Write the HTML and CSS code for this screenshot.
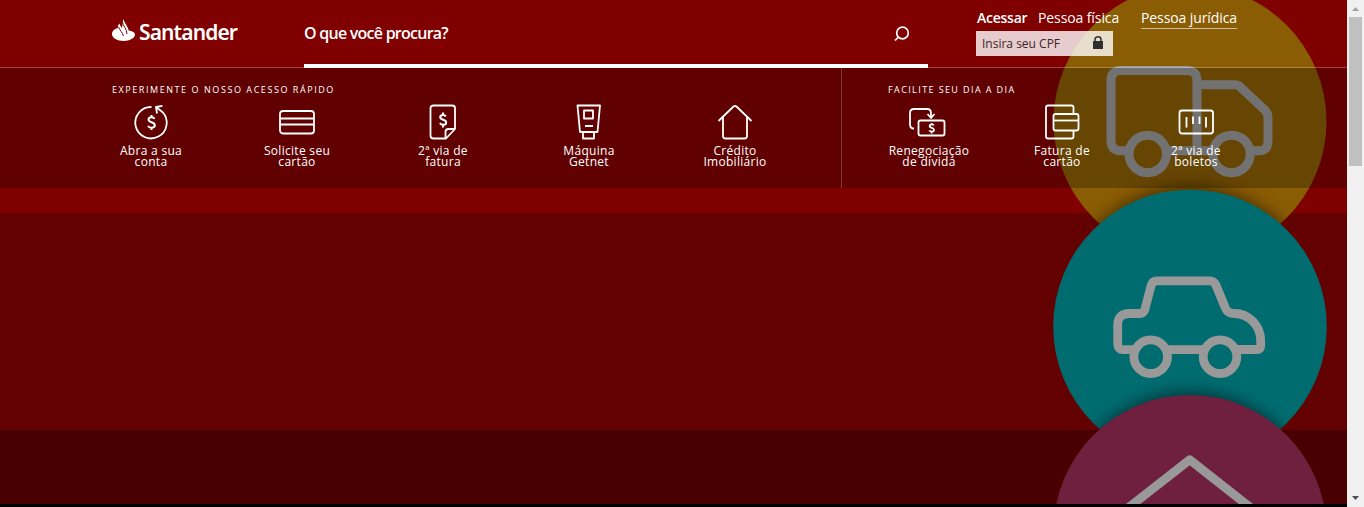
FILE: index.html
```
<!DOCTYPE html>
<html lang="pt-BR">
<head>
<meta charset="utf-8">
<title>Santander</title>
<link rel="stylesheet" href="styles.css">
</head>
<body>
<div class="window">
  <div class="page">
    <svg class="art" viewBox="0 0 1347 504" aria-hidden="true">
      <defs><filter id="soft" x="-20%" y="-20%" width="140%" height="140%"><feGaussianBlur stdDeviation="8"/></filter>
      <clipPath id="c1"><circle cx="1190" cy="121.5" r="136.5"/></clipPath>
      <clipPath id="c2"><circle cx="1190" cy="326.5" r="136.8"/></clipPath></defs>
      <circle cx="1190" cy="121.5" r="136.5" fill="#8a5c04"/>
      <g fill="none" stroke="#999" stroke-width="9" stroke-linejoin="round">
        <path d="M1129 150.700h-8q-10 0-10-10V80.500q0-10 10-10h66q10 0 10 10v70M1166 150.700h47M1197 84.700h38q3 0 5 2l25 23.500q3 3 3 7v24q0 9.500-9 9.500h-9"/>
        <circle cx="1147.700" cy="154" r="18.700"/><circle cx="1231.500" cy="154" r="18.700"/>
      </g>
      <g clip-path="url(#c1)"><circle cx="1190" cy="317" r="130" fill="#000" opacity=".5" filter="url(#soft)"/></g>
      <circle cx="1190" cy="326.500" r="136.800" fill="#006c70"/>
      <g fill="none" stroke="#999" stroke-width="8.800" stroke-linejoin="round">
        <path d="M1134 349.700h-11q-5.300 0-5.300-6V325q0-11.500 12-11.500h10q4 0 5.300-4.500l6-23q1.300-5.200 6-5.200h53q4 0 6 4.500l9.500 23q2.500 5.200 9 5.200c14 0 26.200 12 26.200 27v5q0 4-3.500 4H1236M1166 349.700h39"/>
        <circle cx="1150.700" cy="356.700" r="16.800"/><circle cx="1220" cy="356.700" r="16.800"/>
      </g>
      <g clip-path="url(#c2)"><circle cx="1190" cy="522" r="130" fill="#000" opacity=".5" filter="url(#soft)"/></g>
      <circle cx="1190" cy="531.500" r="136.500" fill="#6e203e"/>
      <path d="M1120 514.300l69.700-54.500L1259 514.300" fill="none" stroke="#999" stroke-width="8.800" stroke-linejoin="round"/>
    </svg>
    <header class="header">
      <a class="logo">
        <svg width="24" height="24" viewBox="0 0 24 24"><path fill="#fff" d="M11.200 1c.8 2.500 2.500 5 4 7.800 1 1.800 1.400 3 1.400 3.600 3.800.7 6.400 1.700 6.400 4.200 0 3.600-5 6.400-11.400 6.400S0 19.800 0 16c0-2.700 2.300-5.200 5.800-6 .2-2 .3-3.500 1.600-4.600.6 1.800 1.500 3 2.600 4.700z"/><path fill="none" stroke="#800000" stroke-width="1" d="M10.400 4c.4 3.500 4.600 7 4.600 12M6.500 9c.8 3 4.300 5.500 4.900 9"/></svg>
        <span class="brand">Santander</span>
      </a>
      <div class="search"><span>O que você procura?</span>
        <svg class="lens" width="16" height="16" viewBox="0 0 16 16" fill="none" stroke="#fff" stroke-width="1.700"><circle cx="8.500" cy="7" r="5.800"/><path d="M4.500 11L1 14.500"/></svg>
      </div>
      <div class="access">
        <div class="tabs"><b>Acessar</b><span class="fis">Pessoa física</span><span class="jur">Pessoa jurídica</span></div>
        <div class="cpf"><span>Insira seu CPF</span>
          <svg width="10" height="13" viewBox="0 0 10 13"><path d="M2 6V3.500Q2 .8 5 .8t3 2.700V6" fill="none" stroke="#303030" stroke-width="1.500"/><path d="M0 5h10v8H0z" fill="#303030"/></svg>
        </div>
      </div>
    </header>
    <nav class="quick">
      <section class="group main">
        <h2>EXPERIMENTE O NOSSO ACESSO RÁPIDO</h2>
        <div class="items">
          <a class="item w78"><svg class="ico" viewBox="0 0 36 36"><path d="M18.500 3A15.700 15.700 0 1 0 29.500 8M24 9.500l-1-6.500 6.500-1.200M23 3l7 5.500"/><path class="thick" d="M21.500 15c-1-2.500-6-2.300-6 .6 0 3.400 6.300 2 6.300 5.600 0 3-5.400 3.300-6.800.7M18.500 11v3m0 9v3"/></svg>Abra a sua<br>conta</a>
          <a class="item w78"><svg class="ico" viewBox="0 0 36 36"><rect x="1" y="7" width="34" height="22.500" rx="3"/><path d="M1 14.500h34M1 20.500h34"/></svg>Solicite seu<br>cartão</a>
          <a class="item w78"><svg class="ico" viewBox="0 0 36 36"><path d="M21 34.500H8.500q-3 0-3-3V4q0-2.500 3-2.500h18.500q3 0 3 2.500v21zM20.500 34v-6q0-3 3-3h6"/><path class="thick" d="M20.800 12.500c-1-2.300-5.600-2-5.600.7 0 3.200 6 2 6 5.200 0 3-5 3-6.200.6M18 8.500v3m0 9v3"/></svg>2ª via de<br>fatura</a>
          <a class="item w78"><svg class="ico" viewBox="0 0 36 36"><path d="M6.500 1.500h22.500l-2.500 26.500H9zM13 6.500h9v8h-9zM14 22h8M12 28h11v6.500H12z"/></svg>Máquina<br>Getnet</a>
          <a class="item w78"><svg class="ico" viewBox="0 0 36 36"><path d="M1.500 17L16.500 2.500q1.500-1 3 0L34.500 17M6 13v19q0 2.500 2.500 2.500h19q2.500 0 2.500-2.500V13"/></svg>Crédito<br>Imobiliário</a>
        </div>
      </section>
      <section class="group daily">
        <h2>FACILITE SEU DIA A DIA</h2>
        <div class="items">
          <a class="item w82"><svg class="ico" viewBox="2 0 36 36"><path d="M5 24.500q-4 0-4-4V9q0-4 4-4h13q4 0 4 4v4M18.500 10l3.500 4 3.500-4"/><rect x="9.500" y="16.500" width="26" height="15" rx="2"/><path d="M24.800 21.500c-.6-1.800-4.200-1.500-4.200.4 0 2.500 4.400 1.500 4.400 4 0 2-3.800 2.300-4.700.4M22.600 19v2m0 6v2.500"/></svg>Renegociação<br>de dívida</a>
          <a class="item w78 bill"><svg class="ico" viewBox="0 0 36 36"><path d="M29.500 9V3q0-1.500-2-1.500H4Q2 1.500 2 3.500v29q0 2 2 2h23.500q2 0 2-2V27"/><rect x="9.500" y="10" width="25" height="16.500" rx="2"/><path d="M9.500 16.500h25"/></svg>Fatura de<br>cartão</a>
          <a class="item w78"><svg class="ico" viewBox="0 0 36 36"><rect x="1.500" y="6.500" width="33.500" height="23" rx="2.500"/><path d="M8.500 13v10.500M15 12.500V20M21.500 12.500V20M28 13v10.500"/></svg>2ª via de<br>boletos</a>
        </div>
      </section>
    </nav>
    <div class="gap"></div>
    <main class="hero"></main>
    <div class="lower"></div>
    <div class="edge"></div>
  </div>
  <aside class="scrollbar">
    <svg width="17" height="17"><path d="M5 11h7L8.500 7z" fill="#a3a3a3"/></svg>
    <div class="thumb"></div>
    <svg class="down" width="17" height="17"><path d="M5 6h7L8.500 10z" fill="#505050"/></svg>
  </aside>
</div>
</body>
</html>
```
FILE: styles.css
```
* { box-sizing: border-box; }
body { margin: 0; overflow: hidden; font-family: "Open Sans", sans-serif; color: #fff; }
.window { display: flex; width: 1364px; height: 507px; }
.page { position: relative; isolation: isolate; width: 1347px; background: #800000; }
.art { position: absolute; z-index: 1; left: 0; top: 0; width: 1347px; height: 504px; }
.header, .quick { position: relative; z-index: 2; display: flex; }
.header { height: 68px; padding-left: 112px; border-bottom: 1px solid rgba(255,255,255,.25); }
.logo { display: flex; width: 192px; padding-top: 18px; gap: 3px; }
.brand { font: 600 21px/28px "Noto Sans", sans-serif; letter-spacing: -.88px; white-space: nowrap; }
.search { display: flex; justify-content: space-between; align-items: center; width: 624px; height: 68px; padding: 2px 18px 0 0; border-bottom: 4px solid #fff; font-size: 16px; font-weight: 600; letter-spacing: -.75px; }
.lens { margin-top: 1px; }
.access { width: 290px; margin-left: 48px; padding-top: 8px; }
.tabs { display: flex; align-items: flex-start; padding-left: 1px; font-size: 14px; line-height: 20px; white-space: nowrap; }
.tabs b { width: 61px; font-weight: 600; letter-spacing: -.25px; }
.fis { width: 103px; letter-spacing: -.1px; }
.jur { width: 96px; letter-spacing: -.1px; border-bottom: 1px solid rgba(255,255,255,.6); }
.cpf { display: flex; justify-content: space-between; align-items: center; width: 137px; height: 25px; margin-top: 2px; padding: 0 10px 0 6px; background: rgba(255,255,255,.8); color: #402327; font-size: 12px; letter-spacing: 0; }
.cpf svg { margin-top: -2px; }
.quick { height: 120px; background: rgba(0,0,0,.25); }
.group { padding-top: 15px; }
.main { width: 842px; padding-left: 112px; border-right: 1px solid rgba(255,255,255,.22); }
.daily { padding-left: 46px; }
h2 { margin: 0; font-size: 9px; line-height: 13px; font-weight: 400; letter-spacing: 1.56px; white-space: nowrap; }
.daily h2 { letter-spacing: 1.4px; }
.items { display: flex; padding-top: 8px; gap: 68px; }
.daily .items { gap: 54px; }
.item { display: flex; flex-direction: column; align-items: center; text-align: center; font-size: 12px; line-height: 11px; letter-spacing: .3px; white-space: nowrap; }
.w78 { width: 78px; }
.w82 { width: 82px; }
.bill { margin: 0 2px 0 -1px; }
.ico { overflow: visible; width: 36px; height: 36px; margin-bottom: 5px; fill: none; stroke: #fff; stroke-width: 1.8; stroke-linejoin: round; }
.thick { stroke-width: 2; }
.gap { height: 25px; }
.hero { height: 217px; background: #630000; }
.lower { height: 74px; background: #480000; }
.edge { height: 3px; background: #000; }
.scrollbar { display: flex; flex-direction: column; width: 17px; background: #f0f0f0; }
.thumb { width: 13px; height: 149px; margin: 0 2px; background: #c0c0c0; }
.down { margin-top: auto; }
```
